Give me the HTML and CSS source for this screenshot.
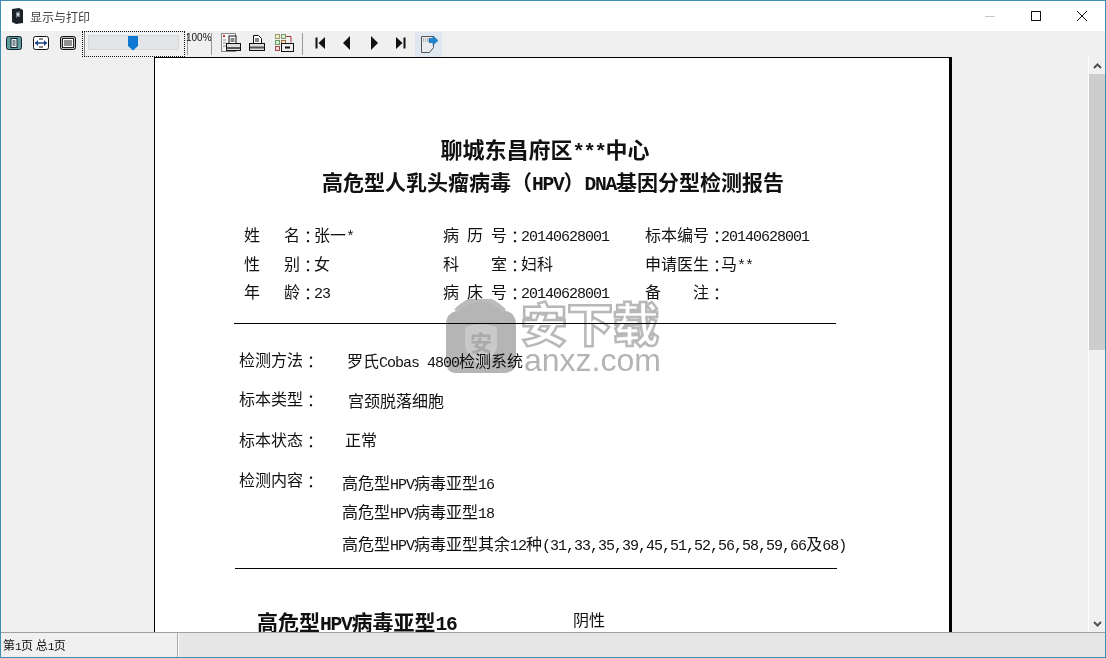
FILE: index.html
```html
<!DOCTYPE html>
<html lang="zh-CN">
<head>
<meta charset="utf-8">
<title>显示与打印</title>
<link rel="stylesheet" href="styles.css">
</head>
<body>
<div class="window">
  <header class="titlebar">
    <svg class="app-icon" width="13" height="16" viewBox="0 0 13 16"><path d="M1 1 L8 0 L12 2 V15 L5 16 L1 14 Z" fill="#1c2228"/><path d="M5 4 L9 3.4 V9 L5 9.6 Z" fill="#6d7780"/><circle cx="7" cy="6.5" r="1.2" fill="#e8edf0"/></svg>
    <span class="title-text">显示与打印</span>
    <div class="win-controls">
      <svg class="wc-min" width="12" height="12" viewBox="0 0 12 12"><path d="M1 6.500H11" stroke="#c8c8c8"/></svg>
      <svg class="wc-max" width="12" height="12" viewBox="0 0 12 12"><rect x="1.500" y="1.500" width="9" height="9" fill="none" stroke="#111"/></svg>
      <svg class="wc-close" width="12" height="12" viewBox="0 0 12 12"><path d="M1 1L11 11M11 1L1 11" stroke="#111"/></svg>
    </div>
  </header>

  <nav class="toolbar">
    <div class="tool t-small"><svg width="16" height="14" viewBox="0 0 16 14"><rect x=".5" y=".5" width="15" height="13" rx="2" fill="#5f9c9a" stroke="#123"/><rect x="5" y="2.500" width="6" height="9" fill="#f4f8f8" stroke="#123"/><path d="M6.500 5h3M6.500 7h3M6.500 9h3" stroke="#123"/></svg></div>
    <div class="tool t-small t-gap"><svg width="16" height="14" viewBox="0 0 16 14"><rect x=".5" y=".5" width="15" height="13" rx="2" fill="#fff" stroke="#111"/><path d="M2 7h12" stroke="#1b3f8a" stroke-width="1.500"/><path d="M5 4v6L2 7zM11 4v6l3-3z" fill="#1b3f8a"/><path d="M6 3h4M6 11h4" stroke="#111"/></svg></div>
    <div class="tool t-small t-gap"><svg width="16" height="14" viewBox="0 0 16 14"><rect x=".5" y=".5" width="15" height="13" rx="2" fill="#bbb" stroke="#111"/><rect x="2.500" y="2.500" width="11" height="9" fill="#fff" stroke="#222"/><path d="M4 5h8M4 7h8M4 9h8" stroke="#222"/></svg></div>
    <div class="zoom-box">
      <div class="track"><div class="thumb"></div></div>
    </div>
    <span class="sep sep-a"></span>
    <span class="pct">100%</span>
    <span class="sep"></span>
    <div class="tool t-a"><svg width="22" height="22" viewBox="0 0 22 22"><rect x="1.500" y="1.500" width="14" height="18" fill="#f7f7f7" stroke="#888"/><rect x="3" y="3" width="2" height="2" fill="#b33"/><path d="M3 8h3M3 11h3M3 14h3" stroke="#888"/><rect x="9" y="4" width="7" height="8" fill="#fff" stroke="#111"/><path d="M10.500 7h4M10.500 9h4" stroke="#111"/><rect x="6.500" y="11.500" width="14" height="7" fill="#ddd" stroke="#111"/><path d="M7 16h13" stroke="#555" stroke-width="2"/></svg></div>
    <div class="tool t-b"><svg width="18" height="18" viewBox="0 0 18 18"><path d="M5.500 1.500h5l3 3v5h-8z" fill="#fff" stroke="#111"/><path d="M7 5h4M7 7h4" stroke="#111"/><rect x="1.500" y="9.500" width="15" height="7" fill="#ddd" stroke="#111"/><path d="M2 13.500h14" stroke="#555" stroke-width="2"/></svg></div>
    <div class="tool t-c"><svg width="20" height="20" viewBox="0 0 20 20"><rect x="1.500" y="1.500" width="4" height="4" fill="#f1efcf" stroke="#9a9a6a"/><rect x="7.500" y="1.500" width="4" height="4" fill="#dff0d8" stroke="#7a9a6a"/><rect x="1.500" y="7.500" width="4" height="4" fill="#d8efcf" stroke="#6a9a6a"/><rect x="7.500" y="7.500" width="4" height="4" fill="#f3e2cf" stroke="#a06a3a"/><rect x="1.500" y="13.500" width="4" height="4" fill="#f4d8d8" stroke="#a04a4a"/><path d="M12 3.500h5v6" fill="none" stroke="#a33"/><rect x="7.500" y="10.500" width="12" height="8" fill="#eee" stroke="#111"/><path d="M11 14.500h5" stroke="#111" stroke-width="2"/></svg></div>
    <span class="sep sep-2"></span>
    <div class="tool t-nav t-nav-first"><svg width="12" height="14" viewBox="0 0 12 14"><path d="M1.500 1.500h2v11h-2zM11 1v12L4.500 7z" fill="#111"/></svg></div>
    <div class="tool t-nav"><svg width="12" height="14" viewBox="0 0 12 14"><path d="M9 0v14L2 7z" fill="#111"/></svg></div>
    <div class="tool t-nav"><svg width="12" height="14" viewBox="0 0 12 14"><path d="M3 0v14l7-7z" fill="#111"/></svg></div>
    <div class="tool t-nav"><svg width="12" height="14" viewBox="0 0 12 14"><path d="M8.500 1.500h2v11h-2zM1 1v12l6.500-6z" fill="#111"/></svg></div>
    <div class="tool t-export"><svg width="20" height="20" viewBox="0 0 20 20"><path d="M2.500 2.500h12v11l-4 5h-8z" fill="#e9ecef" stroke="#555"/><path d="M4 5h1M6 5h1M8 5h1M4 7h1M6 7h1M8 7h1" stroke="#888"/><path d="M10 4.500h4V2l5 4.500-5 4.500V8.500h-4z" fill="#1f87d0" stroke="#0f5f9f" stroke-width=".6"/></svg></div>
  </nav>

  <main class="viewer">
    <div class="canvas">
      <article class="paper">
        <h1 class="r-title">聊城东昌府区<span class="lat">***</span>中心</h1>
        <h2 class="r-sub">高危型人乳头瘤病毒（<span class="lat">HPV</span>）<span class="lat">DNA</span>基因分型检测报告</h2>
        <section class="info">
          <div class="f"><span class="lbl lbl-s"><i>姓</i><i>名</i></span><span class="col">：</span><span>张一<span class="lat">*</span></span></div>
          <div class="f"><span class="lbl"><i>病</i><i>历</i><i>号</i></span><span class="col">：</span><span class="lat">20140628001</span></div>
          <div class="f"><span class="lbl"><i>标</i><i>本</i><i>编</i><i>号</i></span><span class="col col-s">：</span><span class="lat">20140628001</span></div>
          <div class="f"><span class="lbl lbl-s"><i>性</i><i>别</i></span><span class="col">：</span><span>女</span></div>
          <div class="f"><span class="lbl"><i>科</i><i>室</i></span><span class="col">：</span><span>妇科</span></div>
          <div class="f"><span class="lbl"><i>申</i><i>请</i><i>医</i><i>生</i></span><span class="col col-s">：</span><span>马<span class="lat">**</span></span></div>
          <div class="f"><span class="lbl lbl-s"><i>年</i><i>龄</i></span><span class="col">：</span><span class="lat">23</span></div>
          <div class="f"><span class="lbl"><i>病</i><i>床</i><i>号</i></span><span class="col">：</span><span class="lat">20140628001</span></div>
          <div class="f"><span class="lbl"><i>备</i><i>注</i></span><span class="col col-s">：</span></div>
        </section>
        <hr class="rule">
        <section class="method">
          <div class="m-label">检测方法<span class="col">：</span></div>
          <div class="m-val v1">罗氏<span class="lat">Cobas 4800</span>检测系统</div>
          <div class="m-label">标本类型<span class="col">：</span></div>
          <div class="m-val v2">宫颈脱落细胞</div>
          <div class="m-label">标本状态<span class="col">：</span></div>
          <div class="m-val v3">正常</div>
          <div class="m-label">检测内容<span class="col">：</span></div>
          <div class="m-list">
            <div class="li-1">高危型<span class="lat">HPV</span>病毒亚型<span class="lat">16</span></div>
            <div class="li-2">高危型<span class="lat">HPV</span>病毒亚型<span class="lat">18</span></div>
            <div>高危型<span class="lat">HPV</span>病毒亚型其余<span class="lat">12</span>种<span class="lat">(31,33,35,39,45,51,52,56,58,59,66</span>及<span class="lat">68)</span></div>
          </div>
        </section>
        <hr class="rule rule-2">
        <section class="result">
          <strong>高危型<span class="lat">HPV</span>病毒亚型<span class="lat">16</span></strong>
          <span>阴性</span>
        </section>
      </article>
      <svg class="watermark" width="216" height="76" viewBox="0 0 216 76">
        <path d="M14 9 Q36 -8 58 9 L62 12 Q72 14 72 26 V62 Q72 74 60 74 H12 Q2 74 2 62 V26 Q2 14 12 12Z" fill="#b5b5b5"/>
        <path d="M12 12 Q36 -12 60 12" fill="none" stroke="#bbb" stroke-width="5"/>
        <path d="M21 28 Q37 22 53 28 V48 Q50 60 37 66 Q24 60 21 48Z" fill="#c9c9c9"/>
        <text x="37" y="52" class="wm-shield">安</text>
        <text x="77" y="42" class="wm-cn">安下载</text>
        <text x="80" y="72" class="wm-en">anxz.com</text>
      </svg>
    </div>
    <aside class="scrollbar">
      <div class="sb-btn"><svg width="9" height="6" viewBox="0 0 9 6"><path d="M1 5l3.500-3.500L8 5" fill="none" stroke="#505050" stroke-width="2"/></svg></div>
      <div class="sb-thumb"></div>
      <div class="sb-space"></div>
      <div class="sb-btn"><svg width="9" height="6" viewBox="0 0 9 6"><path d="M1 1l3.500 3.500L8 1" fill="none" stroke="#505050" stroke-width="2"/></svg></div>
    </aside>
  </main>

  <footer class="statusbar">
    <div class="status-cell">第<span class="lat">1</span>页 总<span class="lat">1</span>页</div>
    <div class="status-rest"></div>
  </footer>
</div>
</body>
</html>
```
FILE: styles.css
```css
* { box-sizing: border-box; }
html, body { margin: 0; padding: 0; }
body {
  width: 1106px;
  height: 658px;
  overflow: hidden;
  font-family: "Noto Sans CJK SC", "Liberation Sans", sans-serif;
  color: #111;
}
/* SimSun-style half-width Latin: advance is .6 x .9375 - .0625 = .5em of the surrounding text */
.lat {
  font-family: "Liberation Mono", monospace;
  font-size: .9375em;
  letter-spacing: -.0667em;
  line-height: 0;
}
.window {
  width: 1106px;
  height: 658px;
  display: flex;
  flex-direction: column;
  border: 1px solid #3f8fb5;
  background: #f0f0f0;
}
.titlebar {
  height: 30px;
  flex: none;
  display: flex;
  align-items: center;
  background: #fff;
  padding-left: 10px;
}
.app-icon { flex: none; }
.title-text {
  margin-left: 6px;
  font-size: 12px;
  color: #444;
}
.win-controls {
  margin-left: auto;
  display: flex;
  align-items: center;
  gap: 34px;
  padding-right: 17px;
}
.toolbar {
  height: 26px;
  flex: none;
  display: flex;
  align-items: center;
  background: #f0f0f0;
  padding-left: 5px;
}
.tool {
  flex: none;
  width: 27px;
  display: flex;
  justify-content: center;
  margin-top: -2px;
}
.tool svg { display: block; }
.t-small { width: 16px; }
.t-gap { margin-left: 11px; }
.zoom-box {
  flex: none;
  width: 103px;
  height: 26px;
  margin-left: 6px;
  margin-top: -1px;
  border: 1px dotted #111;
  padding: 3px 0 0 5px;
  background: linear-gradient(90deg, #888 0 1px, transparent 1px) 1px 0 no-repeat;
}
.track {
  position: relative;
  width: 91px;
  height: 15px;
  background: #e3e6e8;
  border: 1px solid #d6d9db;
}
.thumb {
  position: absolute;
  left: 39px;
  top: 0;
  width: 10px;
  height: 15px;
  background: #0f78d4;
  clip-path: polygon(0 0, 100% 0, 100% 70%, 50% 100%, 0 70%);
}
.sep-a { margin-left: 2px; }
.pct {
  flex: none;
  width: 25px;
  margin: -13px 0 0 -2px;
  font: 10px/12px "Liberation Sans", sans-serif;
  color: #111;
}
.sep {
  flex: none;
  width: 1px;
  height: 22px;
  background: #999;
}
.t-a { width: 26px; margin-left: 6px; }
.t-b { width: 26px; }
.t-c { width: 28px; }
.sep-2 { margin-left: 4px; }
.t-nav-first { margin-left: 3px; }
.t-export {
  width: 27px;
  height: 25px;
  margin-top: 0;
  margin-left: 1px;
  align-items: center;
  background: #dfe8f0;
}
.viewer {
  flex: 1;
  min-height: 0;
  display: flex;
}
.canvas {
  position: relative;
  flex: 1;
  min-width: 0;
  overflow: hidden;
  background: #f0f0f0;
  padding-left: 153px;
}
.paper {
  width: 798px;
  height: 660px;
  background: #fff;
  border: 1px solid #000;
  border-right-width: 3px;
  padding-top: 76px;
  padding-left: 79px;
}
.r-title {
  margin: 0 0 0 1px;
  width: 620px;
  text-align: center;
  font-size: 22px;
  line-height: 28px;
  font-weight: 700;
}
.r-sub {
  margin: 6px 0 0 9px;
  width: 620px;
  text-align: center;
  font-size: 21px;
  line-height: 27px;
  font-weight: 700;
}
.info {
  margin: 25px 0 0 10px;
  display: grid;
  grid-template-columns: 199px 202px 1fr;
  grid-auto-rows: 28.5px;
  font-size: 16px;
}
.f { display: flex; align-items: baseline; line-height: 28px; white-space: nowrap; }
.lbl { display: flex; justify-content: space-between; width: 64px; }
.lbl-s { width: 56px; }
.lbl i { font-style: normal; }
.col {
  font-family: "Noto Sans CJK TC", sans-serif;
  display: inline-block;
  width: 14px;
  text-align: center;
  transform: translateY(2px);
}
.col-s { width: 12px; }
.rule {
  width: 602px;
  height: 1px;
  margin: 17px 0 0 0;
  border: 0;
  background: #000;
}
.method {
  margin: 25px 0 0 5px;
  display: grid;
  grid-template-columns: 108px 1fr;
  grid-template-rows: 39px 41px 40px auto;
  font-size: 16px;
  line-height: 20px;
  white-space: nowrap;
}
.v1 { margin-top: 1px; }
.v2 { margin: 2px 0 0 1px; }
.v3 { margin-left: -2px; }
.m-list { margin: 3px 0 0 -5px; }
.li-1 { margin-bottom: 9px; }
.li-2 { margin-bottom: 12px; }
.rule-2 { margin: 15px 0 0 1px; }
.result {
  margin: 38px 0 0 23px;
  display: flex;
  align-items: flex-start;
  font-size: 16px;
  line-height: 24px;
}
.result strong { font-size: 21px; line-height: 28px; width: 316px; }
.watermark {
  position: absolute;
  left: 443px;
  top: 242px;
  mix-blend-mode: multiply;
}
.wm-shield { font-size: 22px; font-weight: 700; fill: #aaa; text-anchor: middle; }
.wm-cn {
  font-size: 46px;
  font-weight: 900;
  fill: #fff;
  stroke: #b8b8b8;
  stroke-width: 2.5px;
}
.wm-en { font: 32px "Liberation Sans", sans-serif; fill: #b4b4b4; }
.scrollbar {
  flex: none;
  width: 17px;
  display: flex;
  flex-direction: column;
  background: #f0f0f0;
  border-left: 1px solid #fff;
}
.sb-btn {
  flex: none;
  height: 17px;
  display: flex;
  align-items: center;
  justify-content: center;
}
.sb-thumb { flex: none; height: 276px; background: #cdcdcd; }
.sb-space { flex: 1; }
.statusbar {
  height: 25px;
  flex: none;
  display: flex;
  background: #e6e6e6;
  border-top: 1px solid #a0a0a0;
}
.status-cell {
  flex: none;
  width: 177px;
  background: #f0f0f0;
  border-right: 1px solid #aaa;
  font-size: 12px;
  line-height: 24px;
  padding-left: 2px;
}
.status-rest { flex: 1; border-left: 1px solid #fff; }
```
